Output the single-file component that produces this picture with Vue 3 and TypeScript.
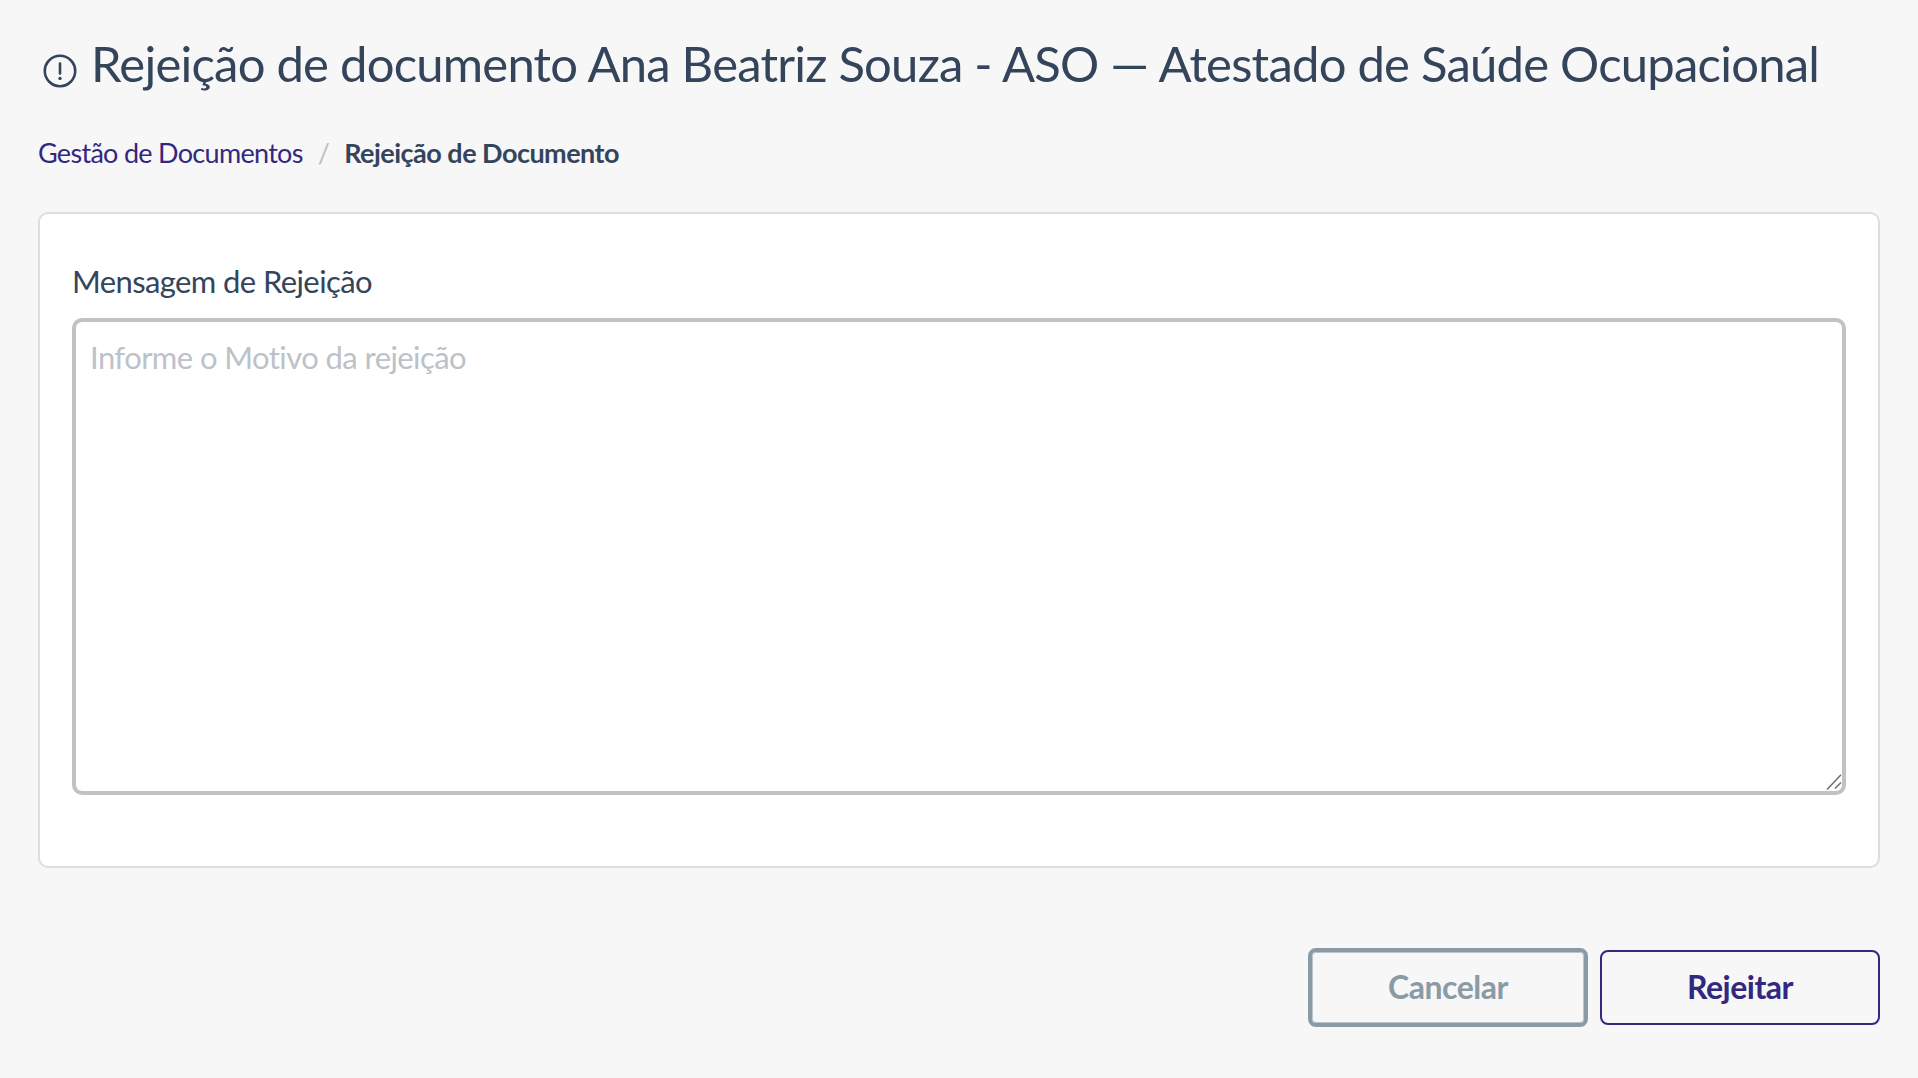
<script setup lang="ts">
const title = 'Rejeição de documento Ana Beatriz Souza - ASO — Atestado de Saúde Ocupacional'
</script>

<template>
  <main class="page">
    <header class="head">
      <svg class="icon" viewBox="0 0 34 34" fill="none" aria-hidden="true">
        <circle cx="17" cy="17" r="15.2" stroke="#34455b" stroke-width="2.6" />
        <path d="M17 9.5v10" stroke="#34455b" stroke-width="2.6" stroke-linecap="round" />
        <circle cx="17" cy="24.4" r="1.7" fill="#34455b" />
      </svg>
      <h1 class="title">{{ title }}</h1>
    </header>
    <nav class="crumbs">
      <a class="crumb-link">Gestão de Documentos</a>
      <span class="sep">/</span>
      <strong class="crumb-current">Rejeição de Documento</strong>
    </nav>
    <section class="card">
      <label class="label" for="motivo">Mensagem de Rejeição</label>
      <div class="area-wrap">
        <textarea id="motivo" class="area" placeholder="Informe o Motivo da rejeição"></textarea>
        <svg class="grip" viewBox="0 0 16 16" fill="none" aria-hidden="true">
          <path d="M1 15.5 15 .8M9 14.5l6-6" stroke="#6b6f72" stroke-width="1.5" />
        </svg>
      </div>
    </section>
    <footer class="actions">
      <button class="btn cancel" type="button">Cancelar</button>
      <button class="btn reject" type="button">Rejeitar</button>
    </footer>
  </main>
</template>

<style>
html, body { margin: 0; background: #f7f7f8; }
</style>

<style scoped>
.page {
  box-sizing: border-box;
  width: 1918px;
  height: 1078px;
  padding: 33px 38px 0;
  background: #f7f7f8;
  font-family: Lato, "Open Sans", sans-serif;
  font-variant-ligatures: none;
  color: #34455b;
  overflow: hidden;
}
.head {
  display: flex;
  align-items: center;
  gap: 14px;
  height: 60px;
  padding-left: 5px;
}
.icon { width: 34px; height: 34px; flex: none; margin-top: 15px; }
.title {
  margin: 0;
  font-size: 49px;
  font-weight: 400;
  letter-spacing: -0.78px;
  line-height: 60px;
  white-space: nowrap;
}
.crumbs {
  display: flex;
  align-items: center;
  height: 32px;
  margin-top: 44px;
  font-size: 27px;
  letter-spacing: -0.7px;
  line-height: 32px;
}
.crumb-link { color: #34277f; }
.sep { color: #b9c0c7; margin: 0 15px; }
.crumb-current { font-weight: 700; letter-spacing: -0.52px; }
.card {
  box-sizing: border-box;
  height: 656px;
  margin-top: 43px;
  padding: 49px 32px 0;
  background: #fff;
  border: 2px solid #dcdee0;
  border-radius: 10px;
}
.label {
  display: block;
  font-size: 31px;
  letter-spacing: -0.6px;
  line-height: 36px;
  margin-bottom: 19px;
}
.area-wrap { position: relative; }
.area {
  display: block;
  box-sizing: border-box;
  width: 100%;
  height: 477px;
  padding: 17px 14px;
  border: 4px solid #bfc3c4;
  border-radius: 10px;
  background: #fff;
  font: 400 31px/36px Lato, sans-serif;
  font-variant-ligatures: none;
  letter-spacing: -0.57px;
  color: #34455b;
  outline: none;
  resize: none;
}
.area::placeholder { color: #bcc2c8; opacity: 1; }
.grip {
  position: absolute;
  right: 4px;
  bottom: 5px;
  width: 16px;
  height: 16px;
}
.actions {
  display: flex;
  justify-content: flex-end;
  align-items: center;
  gap: 12px;
  margin-top: 80px;
}
.btn {
  box-sizing: border-box;
  width: 280px;
  padding: 0 0 2px;
  background: transparent;
  font: 700 32px/36px Lato, sans-serif;
  letter-spacing: -0.5px;
}
.cancel {
  height: 79px;
  border: 4px solid #8b9ba6;
  border-radius: 8px;
  box-shadow: inset 0 0 0 1px rgba(139, 155, 166, 0.55);
  color: #8b9ba6;
}
.reject {
  height: 75px;
  border: 2px solid #33287f;
  border-radius: 8px;
  color: #33287f;
}
</style>
